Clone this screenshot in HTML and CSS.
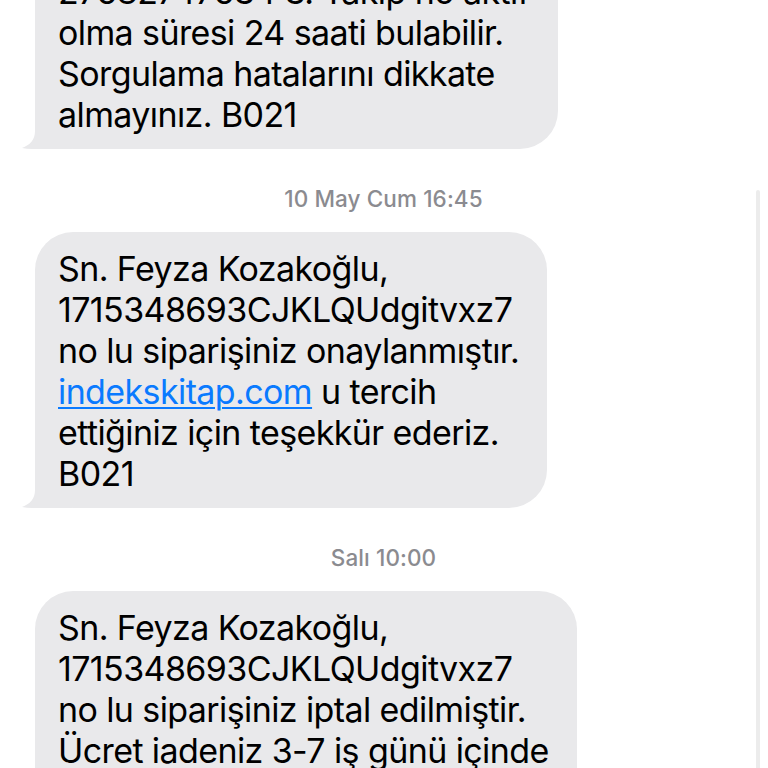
FILE: index.html
```html
<!DOCTYPE html>
<html lang="tr">
<head>
<meta charset="utf-8">
<link rel="stylesheet" href="styles.css">
</head>
<body>
<div class="scroll-indicator"></div>
<main class="thread">
  <div class="bubble bubble-first">
    <svg class="tail" width="50" height="40" viewBox="0 0 50 40"><path d="M13 0 H50 V40 H24 C16 40 8 40.5 0 39 C8 36 13 31 13 22 Z" fill="#e9e9eb"/></svg>
    <p class="msg">Kargo takip numaranız:<br>27682747634 3. Takip no aktif<br>olma süresi 24 saati bulabilir.<br>Sorgulama hatalarını dikkate<br>almayınız. B021</p>
  </div>

  <div class="stamp">10 May Cum 16:45</div>

  <div class="bubble bubble-second">
    <svg class="tail" width="50" height="40" viewBox="0 0 50 40"><path d="M13 0 H50 V40 H24 C16 40 8 40.5 0 39 C8 36 13 31 13 22 Z" fill="#e9e9eb"/></svg>
    <p class="msg">Sn. Feyza Kozakoğlu,<br>1715348693CJKLQUdgitvxz7<br>no lu siparişiniz onaylanmıştır.<br><a class="link" href="#">indekskitap.com</a> u tercih<br>ettiğiniz için teşekkür ederiz.<br>B021</p>
  </div>

  <div class="stamp">Salı 10:00</div>

  <div class="bubble bubble-third">
    <p class="msg">Sn. Feyza Kozakoğlu,<br>1715348693CJKLQUdgitvxz7<br>no lu siparişiniz iptal edilmiştir.<br>Ücret iadeniz 3-7 iş günü içinde<br>hesabınıza yansıyacaktır. B021</p>
  </div>
</main>
</body>
</html>
```

FILE: styles.css
```css
html, body {
  margin: 0;
  padding: 0;
  background: #ffffff;
  overflow: hidden;
  height: 768px;
}

body {
  font-family: "Inter", "Noto Sans", "Liberation Sans", sans-serif;
  color: #000;
}

.thread {
  display: flex;
  flex-direction: column;
  align-items: flex-start;
  padding: 0 36px 0 35px;
  margin-top: -86px;
}

.bubble {
  position: relative;
  background: #e9e9eb;
  border-radius: 38px;
  padding: 16px 28px 14px 23px;
}

.msg {
  position: relative;
  margin: 0;
  font-size: 34px;
  line-height: 41px;
  letter-spacing: -0.6px;
  white-space: nowrap;
}

.link {
  color: #0a7aff;
  text-decoration: underline;
  text-decoration-thickness: 1.5px;
  text-underline-offset: 3px;
}

.tail {
  position: absolute;
  left: -13px;
  bottom: 0;
}

.stamp {
  align-self: center;
  margin: 38px 0 21px;
  font-size: 22.5px;
  line-height: 24px;
  font-weight: 500;
  color: #8b8b90;
  letter-spacing: 0.1px;
}

.scroll-indicator {
  position: absolute;
  left: 756px;
  top: 190px;
  width: 4px;
  height: 600px;
  border-radius: 2px;
  background: #ececec;
}
```
